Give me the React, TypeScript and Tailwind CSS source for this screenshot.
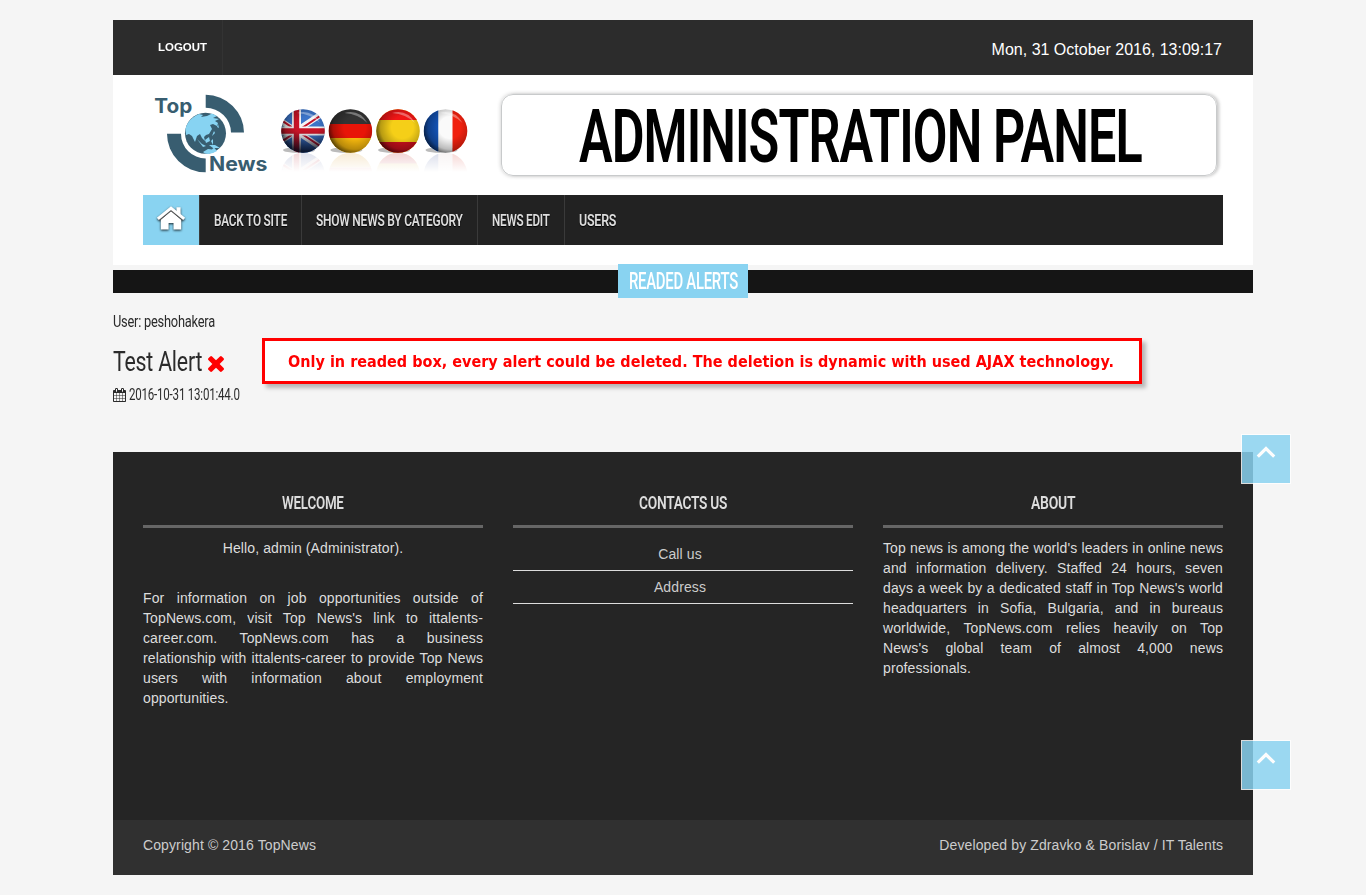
import { useLayoutEffect, useRef, useState } from "react";
import type { ReactNode } from "react";

/* Text squeezed horizontally so that it fills exactly `width` pixels. */
function Fit({ width, className = "", children }: { width: number; className?: string; children: ReactNode }) {
  const ref = useRef<HTMLSpanElement>(null);
  const [scale, setScale] = useState(1);
  useLayoutEffect(() => {
    if (ref.current) setScale(width / ref.current.offsetWidth);
  }, [width]);
  return (
    <span className={`inline-block overflow-visible text-left align-top whitespace-nowrap ${className}`} style={{ width }}>
      <span ref={ref} className="inline-block origin-left" style={{ transform: `scaleX(${scale})` }}>
        {children}
      </span>
    </span>
  );
}

const condensed = "font-['Roboto',sans-serif] tracking-[-0.018em]";

function Logo() {
  return (
    <svg width="130" height="120" viewBox="143 75 130 120" className="shrink-0">
      <g fill="#385d70">
        <path d="M205.7 94.8A38.5 38 0 0 1 244 132.5H231A25.3 25 0 0 0 205.7 107.8Z" />
        <path d="M167 133.7H181A24.7 24.7 0 0 0 205.7 158.4V172.3A38.6 38.6 0 0 1 167 133.7Z" />
        <circle cx="205.5" cy="133.3" r="20.5" />
      </g>
      <g fill="#87d3f2">
        <path d="M185.5 129C187 122 192 117 199 114L203 115L201 117L207 116L212 113.5L217 116L213 118L219 119L215 121L218 123L217 126L213 124L210 125L212 129L209 134L206 135L204 137L205 141L202 138L200 134L197 136L195 142L192 136L189 134L186 135Z" />
        <path d="M197 139L202 144L206 146L203 147ZM205 140L209 137L210 141L206 143ZM211 141L213 139L213 145ZM209 145L215 145L220 148L213 148ZM203 152L208 149L212 149.5L214 147.5L217 151Q211 155 205 153.5Z" />
        <path d="M214 131L215 133L212 136ZM217 127L218 124L219 128Z" />
      </g>
      <g fill="#385d70" fontFamily="Inter, sans-serif" fontWeight="700">
        <text x="154.3" y="112.6" fontSize="19.5" textLength="38" lengthAdjust="spacingAndGlyphs">Top</text>
        <text x="209" y="171.4" fontSize="19.5" textLength="58.5" lengthAdjust="spacingAndGlyphs">News</text>
      </g>
    </svg>
  );
}

function FlagArt({ kind }: { kind: string }) {
  if (kind === "uk")
    return (
      <g>
        <rect x="-22" y="-22" width="44" height="44" fill="#3c74c8" />
        <g transform="translate(-6.5 0)">
          <path d="M-26 -17L40 27M-26 17L40 -27" stroke="#f4f4f4" strokeWidth="6" />
          <path d="M-26 -18L40 26M-26 18L40 -26" stroke="#c3142b" strokeWidth="2" />
          <path d="M0 -25V25M-25 0H40" stroke="#f6f6f6" strokeWidth="9" />
          <path d="M0 -25V25M-25 0H40" stroke="#c81426" strokeWidth="5.4" />
        </g>
      </g>
    );
  if (kind === "de")
    return (
      <g>
        <rect x="-22" y="-22" width="44" height="15" fill="#333" />
        <rect x="-22" y="-7" width="44" height="14" fill="#e81408" />
        <rect x="-22" y="7" width="44" height="16" fill="#f6b80e" />
      </g>
    );
  if (kind === "es")
    return (
      <g>
        <rect x="-22" y="-22" width="44" height="44" fill="#f5cf18" />
        <rect x="-22" y="-22" width="44" height="11" fill="#f01616" />
        <rect x="-22" y="11" width="44" height="12" fill="#c80f1c" />
      </g>
    );
  return (
    <g>
      <rect x="-22" y="-22" width="15" height="44" fill="#1454b8" />
      <rect x="-7" y="-22" width="14" height="44" fill="#fafafa" />
      <rect x="7" y="-22" width="16" height="44" fill="#f0200e" />
    </g>
  );
}

function Flags() {
  const flags = [
    { kind: "uk", x: 303 },
    { kind: "de", x: 350.4 },
    { kind: "es", x: 398 },
    { kind: "fr", x: 445.5 },
  ];
  return (
    <svg width="200" height="120" viewBox="273 75 200 120" className="shrink-0">
      <defs>
        <clipPath id="ball"><circle r="21.8" /></clipPath>
        <radialGradient id="shade" cx="0.6" cy="0.42" r="0.62">
          <stop offset="0.4" stopColor="#000" stopOpacity="0" />
          <stop offset="0.8" stopColor="#000" stopOpacity="0.25" />
          <stop offset="1" stopColor="#000" stopOpacity="0.65" />
        </radialGradient>
        <linearGradient id="under" x1="0" y1="0" x2="0" y2="1">
          <stop offset="0.5" stopColor="#04091a" stopOpacity="0" />
          <stop offset="0.95" stopColor="#04091a" stopOpacity="0.75" />
        </linearGradient>
        <linearGradient id="fade" x1="0" y1="152" x2="0" y2="172" gradientUnits="userSpaceOnUse">
          <stop offset="0" stopColor="#fff" stopOpacity="0.82" />
          <stop offset="1" stopColor="#fff" stopOpacity="1" />
        </linearGradient>
      </defs>
      {flags.map((f) => (
        <g key={f.kind} transform={`translate(${f.x} 174.5) scale(1 -1)`}>
          <g clipPath="url(#ball)">
            <FlagArt kind={f.kind} />
            <circle r="22" fill="#600" opacity="0.25" />
          </g>
        </g>
      ))}
      <rect x="273" y="150" width="200" height="50" fill="url(#fade)" />
      {flags.map((f) => (
        <g key={f.kind}>
          <ellipse cx={f.x - 4} cy="150" rx="16" ry="3" fill="#555" opacity="0.4" />
          <g transform={`translate(${f.x} 131)`}>
            <g clipPath="url(#ball)">
              <FlagArt kind={f.kind} />
              <circle r="22" fill="url(#shade)" />
              {f.kind === "uk" && <circle r="22" fill="url(#under)" />}
              <path d="M-6 -18Q9 -22 17 -8Q8 -17 -6 -18Z" fill="#fff" opacity="0.35" />
            </g>
          </g>
        </g>
      ))}
    </svg>
  );
}

function HomeIcon() {
  return (
    <svg width="28" height="24" viewBox="0 0 28 24" className="mb-[3px] overflow-visible drop-shadow-[0_1px_1px_rgba(0,0,0,0.8)]">
      <path d="M3.8 12.8L14 4L24.2 12.8V22.4H16.5V16H11.6V22.4H3.8Z" fill="#fff" />
      <path d="M19.5 0.3H23.6V7.8L19.5 4.5Z" fill="#fff" />
      <path d="M2 12.6L14 2.8L26 12.6" fill="none" stroke="#555" strokeWidth="2.4" />
      <path d="M0.8 11.8L14 1.1L27.2 11.8" fill="none" stroke="#fff" strokeWidth="3" />
    </svg>
  );
}

function NavItem({ label, width, last = false }: { label: string; width: number; last?: boolean }) {
  return (
    <a className={`block h-[50px] px-[14px] text-[16.5px] leading-[51px] font-semibold text-[#ddd] [text-shadow:0_1px_1px_#000] ${condensed} ${last ? "" : "border-r border-[#3a3a3a]"}`}>
      <Fit width={width}>{label}</Fit>
    </a>
  );
}

function FooterTitle({ label, width }: { label: string; width: number }) {
  return (
    <h2 className={`h-[26px] border-b-[3px] border-[#666] text-center text-[19px] leading-[2px] font-semibold text-[#ddd] ${condensed}`}>
      <Fit width={width}>{label}</Fit>
    </h2>
  );
}

/* Justified paragraph with fixed line ends; the last line stays ragged. */
function Justified({ lines, className }: { lines: string[]; className: string }) {
  return (
    <p className={className}>
      {lines.map((line, i) => (
        <span key={line} className={`block ${i < lines.length - 1 ? "[text-align-last:justify]" : ""}`}>
          {line}
        </span>
      ))}
    </p>
  );
}

function ToTop({ className }: { className: string }) {
  return (
    <a className={`absolute left-[1241px] flex h-[50px] w-[50px] justify-center border border-white bg-[#8ad3f1] pt-[11px] opacity-[0.84] ${className}`}>
      <svg width="20" height="13" viewBox="0 0 20 13">
        <path d="M1.8 10.6L10 2.6L18.2 10.6" fill="none" stroke="#fff" strokeWidth="3.2" />
      </svg>
    </a>
  );
}

const careers = [
  "For information on job opportunities outside of",
  "TopNews.com, visit Top News's link to ittalents-",
  "career.com. TopNews.com has a business",
  "relationship with ittalents-career to provide Top News",
  "users with information about employment",
  "opportunities.",
];

const about = [
  "Top news is among the world's leaders in online news",
  "and information delivery. Staffed 24 hours, seven",
  "days a week by a dedicated staff in Top News's world",
  "headquarters in Sofia, Bulgaria, and in bureaus",
  "worldwide, TopNews.com relies heavily on Top",
  "News's global team of almost 4,000 news",
  "professionals.",
];

export default function App() {
  return (
    <div className="relative h-[895px] w-[1366px] overflow-hidden bg-[#f5f5f5] pt-5 font-['Liberation_Sans',Arial,sans-serif]">
      <div className="mx-auto w-[1140px]">
        <div className="flex h-[55px] justify-between bg-[#2c2c2c] pr-[31px] pl-[30px] text-white">
          <a className="block w-20 border-r border-[#333] pl-[15px] text-[11px] leading-[54px] font-bold">
            <Fit width={49}>LOGOUT</Fit>
          </a>
          <span className="text-base leading-[60px]">Mon, 31 October 2016, 13:09:17</span>
        </div>

        <header className="h-[190px] bg-white px-[30px]">
          <div className="flex h-[120px]">
            <Logo />
            <Flags />
            <div className="mt-[19px] ml-7 flex h-[82px] w-[716px] justify-center rounded-[12px] border border-[#c8cacb] pl-[2px] shadow-[0_0_4px_rgba(0,0,0,0.22),3px_0_3px_rgba(0,0,0,0.1)]">
              <h1 className={`text-[74.5px] leading-[84px] font-semibold text-black ${condensed}`}>
                <Fit width={563}>ADMINISTRATION PANEL</Fit>
              </h1>
            </div>
          </div>
          <nav className="flex h-[50px] bg-[#222]">
            <a className="flex w-[57px] items-center justify-center border-r border-[#3a3a3a] bg-[#89d3f1] bg-clip-padding">
              <HomeIcon />
            </a>
            <NavItem label="BACK TO SITE" width={73} />
            <NavItem label="SHOW NEWS BY CATEGORY" width={147} />
            <NavItem label="NEWS EDIT" width={58} />
            <NavItem label="USERS" width={37} last />
          </nav>
        </header>

        <div className="mt-[5px] flex h-[23px] items-start justify-center bg-[#151515]">
          <h2 className={`-mt-[6px] h-[34px] w-[130px] shrink-0 bg-[#89d3f1] text-center text-[23.5px] leading-[34px] font-medium text-white ${condensed}`}>
            <Fit width={109}>READED ALERTS</Fit>
          </h2>
        </div>

        <main className={`h-[159px] pt-[19px] text-[#2b2b2b] ${condensed}`}>
          <p className="h-5 text-[16px] leading-5">
            <Fit width={102}>User: peshohakera</Fit>
          </p>
          <div className="mt-[14px] flex h-8 items-center text-[28.5px] leading-8">
            <Fit width={89}>Test Alert</Fit>
            <svg width="16" height="16" viewBox="110 366 1188 1188" className="mt-1 ml-[6px]" fill="#f00">
              <path d="M1298 1322q0 40-28 68l-136 136q-28 28-68 28t-68-28l-294-294-294 294q-28 28-68 28t-68-28l-136-136q-28-28-28-68t28-68l294-294-294-294q-28-28-28-68t28-68l136-136q28-28 68-28t68 28l294 294 294-294q28-28 68-28t68 28l136 136q28 28 28 68t-28 68l-294 294 294 294q28 28 28 68z" />
            </svg>
          </div>
          <div className="mt-[7px] flex h-5 items-center text-[16px] leading-5">
            <svg width="13" height="14" viewBox="64 0 1664 1792" fill="#2b2b2b">
              <path d="M192 1664h288v-288h-288v288zm352 0h320v-288h-320v288zm-352-352h288v-320h-288v320zm352 0h320v-320h-320v320zm-352-384h288v-288h-288v288zm736 736h320v-288h-320v288zm-384-736h320v-288h-320v288zm768 736h288v-288h-288v288zm-384-352h320v-320h-320v320zm-352-864v-288q0-13-9.5-22.5t-22.5-9.5h-64q-13 0-22.5 9.5t-9.5 22.5v288q0 13 9.5 22.5t22.5 9.5h64q13 0 22.5-9.5t9.5-22.5zm736 864h288v-320h-288v320zm-384-384h320v-288h-320v288zm384 0h288v-288h-288v288zm32-480v-288q0-13-9.5-22.5t-22.5-9.5h-64q-13 0-22.5 9.5t-9.5 22.5v288q0 13 9.5 22.5t22.5 9.5h64q13 0 22.5-9.5t9.5-22.5zm384-64v1280q0 52-38 90t-90 38h-1408q-52 0-90-38t-38-90v-1280q0-52 38-90t90-38h128v-96q0-66 47-113t113-47h64q66 0 113 47t47 113v96h384v-96q0-66 47-113t113-47h64q66 0 113 47t47 113v96h128q52 0 90 38t38 90z" />
            </svg>
            <Fit width={111} className="ml-[3px]">2016-10-31 13:01:44.0</Fit>
          </div>
        </main>

        <footer className="text-sm leading-5 tracking-[0.11px] text-[#ddd]">
          <div className="grid h-[368px] grid-cols-3 gap-[30px] bg-[#252525] px-[30px] pt-[50px]">
            <section>
              <FooterTitle label="WELCOME" width={62} />
              <p className="mt-[10px] text-center">Hello, admin (Administrator).</p>
              <Justified className="mt-[30px]" lines={careers} />
            </section>
            <section>
              <FooterTitle label="CONTACTS US" width={88} />
              <p className="mt-[10px] h-[33px] border-b border-[#ddd] pt-[6px] pr-[6px] text-center text-[#ccc]">Call us</p>
              <p className="h-[33px] border-b border-[#ddd] pt-[6px] pr-[6px] text-center text-[#ccc]">Address</p>
            </section>
            <section>
              <FooterTitle label="ABOUT" width={44} />
              <Justified className="mt-[10px]" lines={about} />
            </section>
          </div>
          <div className="flex h-[55px] justify-between bg-[#303030] px-[30px] pt-[15px] text-[#ccc]">
            <p>Copyright © 2016 TopNews</p>
            <p>Developed by Zdravko &amp; Borislav / IT Talents</p>
          </div>
        </footer>
      </div>

      <div className="absolute top-[338px] left-[262px] h-[46px] w-[880px] border-[3px] border-[#f00] bg-white pl-[23px] font-['DejaVu_Sans',sans-serif] text-[16.5px] leading-[41px] font-bold text-[#f00] shadow-[4px_4px_4px_rgba(0,0,0,0.25)]">
        <Fit width={826}>Only in readed box, every alert could be deleted. The deletion is dynamic with used AJAX technology.</Fit>
      </div>
      <ToTop className="top-[434px]" />
      <ToTop className="top-[740px]" />
    </div>
  );
}
